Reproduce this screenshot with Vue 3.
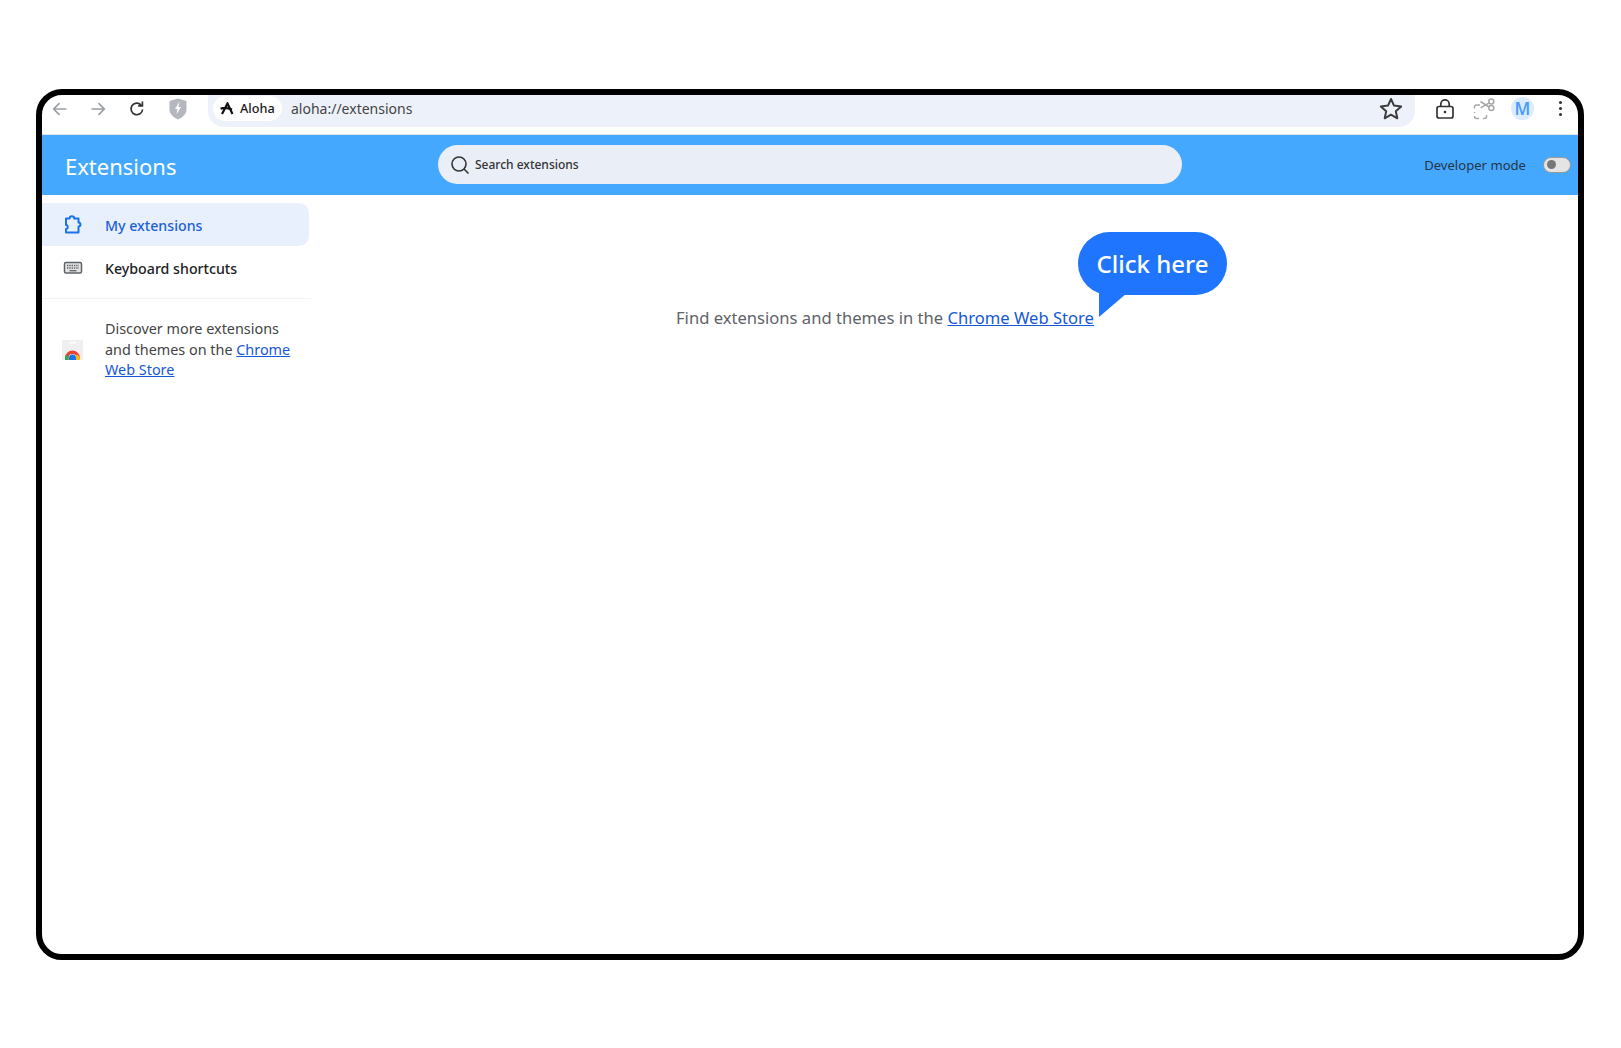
<script setup>
</script>

<template>
  <div class="page">
    <div class="frame">
      <header class="toolbar">
        <div class="tool-btn back">
          <svg width="18" height="18" viewBox="0 0 18 18"><path d="M15.500 9H3M8.500 3.200 2.700 9l5.800 5.800" class="line grey" /></svg>
        </div>
        <div class="tool-btn fwd">
          <svg width="18" height="18" viewBox="0 0 18 18"><path d="M2.500 9H15M9.500 3.200 15.300 9l-5.800 5.800" class="line grey" /></svg>
        </div>
        <div class="tool-btn reload">
          <svg width="18" height="18" viewBox="0 0 18 18"><path d="M14.600 9.500A5.800 5.800 0 1 1 13 4.900M14.400 1.600v4.200h-4.200" class="line dark" /></svg>
        </div>
        <div class="tool-btn shield">
          <svg width="20" height="24" viewBox="0 0 20 24"><path d="M10 1.500 18.500 4v8.500c0 4.500-3.700 7.800-8.500 10-4.800-2.200-8.500-5.500-8.500-10V4Z" fill="#b4b7bd" /><path d="M11.500 4.500 7 12h2.500l-1 5.500L13 10h-2.500Z" fill="#fff" /></svg>
        </div>
        <div class="address">
          <div class="chip">
            <svg width="14" height="13" viewBox="0 0 14 13"><path d="M2 12 7.500 1.500 12.500 12M.6 6.800c3.500-1.600 7-1.200 11.400.8" fill="none" stroke="#111" stroke-width="2.200" /></svg>
            <span>Aloha</span>
          </div>
          <span class="url">aloha://extensions</span>
          <svg class="star" width="26" height="26" viewBox="0 0 26 26"><path d="m13 3 3 6.600 7.200.8-5.400 4.800 1.500 7.100-6.300-3.600-6.300 3.600 1.500-7.100-5.400-4.800 7.200-.8Z" fill="none" stroke="#3d3d3d" stroke-width="2" stroke-linejoin="round" /></svg>
        </div>
        <div class="right-tools">
          <svg width="20" height="22" viewBox="0 0 20 22"><rect x="2" y="8.500" width="16" height="11.500" rx="2" fill="none" stroke="#333" stroke-width="1.700" /><path d="M5.800 8.500V6a4.200 4.200 0 0 1 8.400 0v2.500" fill="none" stroke="#333" stroke-width="1.700" /><circle cx="10" cy="14" r="1.300" fill="#333" /></svg>
          <svg class="snip" width="22" height="22" viewBox="0 0 22 22" fill="none" stroke="#a8a8a8" stroke-width="1.500"><path d="M7 7H3.500a2 2 0 0 0-2 2v1.500M1.500 14v1M1.500 18v.5a2 2 0 0 0 2 2H6M10 20.500h1.500a2 2 0 0 0 2-2V17" /><circle cx="18.300" cy="3.500" r="2.500" /><circle cx="18.300" cy="10" r="2.500" /><path d="m16.200 4.800-8.700 5M16 9 7.500 3.500" /></svg>
          <div class="avatar">M</div>
          <div class="dots"><i></i><i></i><i></i></div>
        </div>
      </header>

      <div class="bluebar">
        <h1>Extensions</h1>
        <div class="search">
          <svg width="20" height="20" viewBox="0 0 20 20"><circle cx="9" cy="9" r="7" fill="none" stroke="#333" stroke-width="1.600" /><path d="m14 14 4.500 4.500" stroke="#333" stroke-width="1.600" /></svg>
          <span>Search extensions</span>
        </div>
        <div class="dev">
          <span>Developer mode</span>
          <div class="toggle"><i></i></div>
        </div>
      </div>

      <div class="content">
        <aside class="sidebar">
          <nav class="nav">
            <a class="nav-item active">
              <svg width="20" height="20" viewBox="0 0 20 20"><path d="M3 3.500h3.600c0-3 4.600-3 4.600 0h4.300v4c2.600 0 2.600 4 0 4v6H3v-3.600c2.300 0 2.300-3.800 0-3.800Z" fill="none" stroke="#1a73e8" stroke-width="2" stroke-linejoin="round" /></svg>
              <span>My extensions</span>
            </a>
            <a class="nav-item">
              <svg width="20" height="20" viewBox="0 0 20 20"><rect x="1.500" y="4.500" width="17" height="10.500" rx="1.500" fill="#e4e4e4" stroke="#5f6368" stroke-width="1.500" /><path d="M4 7.500h12M4 10h12" stroke="#5f6368" stroke-width="1.500" stroke-dasharray="1.400 .9" /><path d="M6.500 12.700h7" stroke="#5f6368" stroke-width="1.300" /></svg>
              <span>Keyboard shortcuts</span>
            </a>
          </nav>
          <div class="promo">
            <svg width="21" height="20" viewBox="0 0 21 20">
              <rect width="21" height="20" fill="#efefef" />
              <rect x="7" y="2" width="7" height="1.500" fill="#fff" />
              <path d="M3 20v-2a7.500 7.500 0 0 1 15 0v2h-3.500v-2a4 4 0 0 0-8 0v2Z" fill="#ea4335" />
              <path d="M15 14.500a7.500 7.500 0 0 1 3 3.500v2h-3.500v-2a4 4 0 0 0-.8-2Z" fill="#fbbc04" />
              <path d="M3 20v-2a7.500 7.500 0 0 1 1-3.500l3 2.300a4 4 0 0 0-.5 1.200v2Z" fill="#34a853" />
              <path d="M7 20v-2a3.500 3.500 0 0 1 7 0v2Z" fill="#1a73e8" />
            </svg>
            <p>Discover more extensions and themes on the <a>Chrome Web Store</a></p>
          </div>
        </aside>
        <main class="main">
          <p class="find">Find extensions and themes in the <a>Chrome Web Store</a></p>
          <div class="bubble">Click here</div>
        </main>
      </div>
    </div>
  </div>
</template>

<style scoped>
.page {
  width: 1621px;
  height: 1048px;
  padding: 89px 37px 88px 36px;
  box-sizing: border-box;
  background: #fff;
  font-family: "Noto Sans", "Open Sans", sans-serif;
}
.frame {
  height: 100%;
  box-sizing: border-box;
  border: 6px solid #000;
  border-radius: 26px;
  overflow: hidden;
  display: flex;
  flex-direction: column;
}
.toolbar {
  height: 40px;
  flex: none;
  display: flex;
  align-items: flex-start;
  padding-left: 8px;
  box-sizing: border-box;
  border-bottom: 1px solid #dfe3ea;
}
.tool-btn {
  width: 20px;
  height: 28px;
  margin-right: 18px;
  display: flex;
  align-items: center;
  justify-content: center;
}
.tool-btn.fwd { margin-right: 19px; }
.tool-btn.reload { margin-right: 21px; }
.tool-btn.shield { margin-right: 20px; }
.line { fill: none; stroke-width: 1.700; }
.grey { stroke: #9aa0a6; }
.dark { stroke: #333; stroke-width: 1.700; }
.address {
  width: 1207px;
  height: 32px;
  flex: none;
  box-sizing: border-box;
  background: #edf2fa;
  border-radius: 0 0 16px 16px;
  display: flex;
  align-items: center;
  padding: 0 11px 0 5px;
}
.chip {
  width: 69px;
  height: 25px;
  margin-top: -6px;
  background: #fff;
  border-radius: 13px;
  display: flex;
  align-items: center;
  gap: 6px;
  padding-left: 7px;
  box-sizing: border-box;
  font-size: 12.700px;
  font-weight: 500;
  color: #1a1a1a;
}
.url {
  margin-left: 9px;
  margin-top: -6px;
  font-size: 14px;
  color: #444;
  flex: 1;
}
.star { margin-top: -4px; }
.right-tools {
  flex: 1;
  height: 27px;
  display: flex;
  align-items: center;
  padding-left: 20px;
  gap: 17px;
}
.snip { margin-left: 1px; }
.avatar {
  width: 23px;
  height: 23px;
  margin-left: -1px;
  border-radius: 50%;
  background: #dcecff;
  color: #4a9dfb;
  font-size: 17px;
  font-weight: 600;
  display: flex;
  align-items: center;
  justify-content: center;
}
.dots {
  margin-left: 8px;
  display: flex;
  flex-direction: column;
  gap: 3px;
}
.dots i {
  width: 3px;
  height: 3px;
  border-radius: 50%;
  background: #333;
}
.bluebar {
  height: 60px;
  flex: none;
  background: #44a8ff;
  display: flex;
  align-items: center;
  padding: 0 7px 0 23px;
}
.bluebar h1 {
  width: 373px;
  margin: 0;
  font-size: 22px;
  font-weight: 400;
  color: #fff;
  padding-top: 1px;
}
.search {
  width: 744px;
  height: 39px;
  margin-top: -1px;
  background: #e9eef7;
  border-radius: 20px;
  display: flex;
  align-items: center;
  gap: 5px;
  padding-left: 12px;
  box-sizing: border-box;
  font-size: 12px;
  font-weight: 500;
  color: #333;
}
.dev {
  margin-left: auto;
  margin-top: -1px;
  display: flex;
  align-items: center;
  gap: 17px;
  font-size: 13.100px;
  color: #263548;
}
.toggle {
  width: 28px;
  height: 16px;
  box-sizing: border-box;
  background: #e4e4e4;
  border: 1px solid #999;
  border-radius: 8px;
  display: flex;
  align-items: center;
  padding-left: 3px;
}
.toggle i {
  width: 9px;
  height: 9px;
  border-radius: 50%;
  background: #777;
}
.content {
  flex: 1;
  display: flex;
}
.sidebar {
  width: 269px;
  flex: none;
}
.nav {
  padding-top: 8px;
  padding-bottom: 9px;
  border-bottom: 1px solid #f3f3f3;
}
.nav-item {
  width: 267px;
  height: 43px;
  display: flex;
  align-items: center;
  gap: 22px;
  padding-left: 21px;
  box-sizing: border-box;
  font-size: 14.200px;
  font-weight: 500;
  color: #202124;
}
.nav-item span { padding-top: 1px; }
.nav-item.active {
  background: #e8f0fe;
  border-radius: 0 10px 10px 0;
  color: #1a62d6;
}
.promo {
  display: flex;
  align-items: center;
  gap: 22px;
  padding: 20px 0 0 20px;
}
.promo svg { flex: none; }
.promo p {
  margin: 0;
  width: 192px;
  font-size: 14.400px;
  font-weight: 450;
  line-height: 20.500px;
  color: #444;
}
.promo a, .find a {
  color: #1558d6;
  text-decoration: underline;
}
.main {
  flex: 1;
  position: relative;
  padding: 111px 0 0 365px;
}
.find {
  margin: 0;
  font-size: 16.600px;
  line-height: 24px;
  color: #5f6368;
}
.bubble {
  position: absolute;
  left: 767px;
  top: 37px;
  width: 149px;
  height: 63px;
  border-radius: 32px;
  background: #1f75fe;
  color: #fff;
  font-size: 24px;
  font-weight: 500;
  display: flex;
  align-items: center;
  justify-content: center;
}
.bubble::after {
  content: "";
  position: absolute;
  left: 21px;
  top: 58px;
  width: 26px;
  height: 27px;
  background: #1f75fe;
  clip-path: polygon(0 0, 100% 18%, 0 100%);
}
</style>
